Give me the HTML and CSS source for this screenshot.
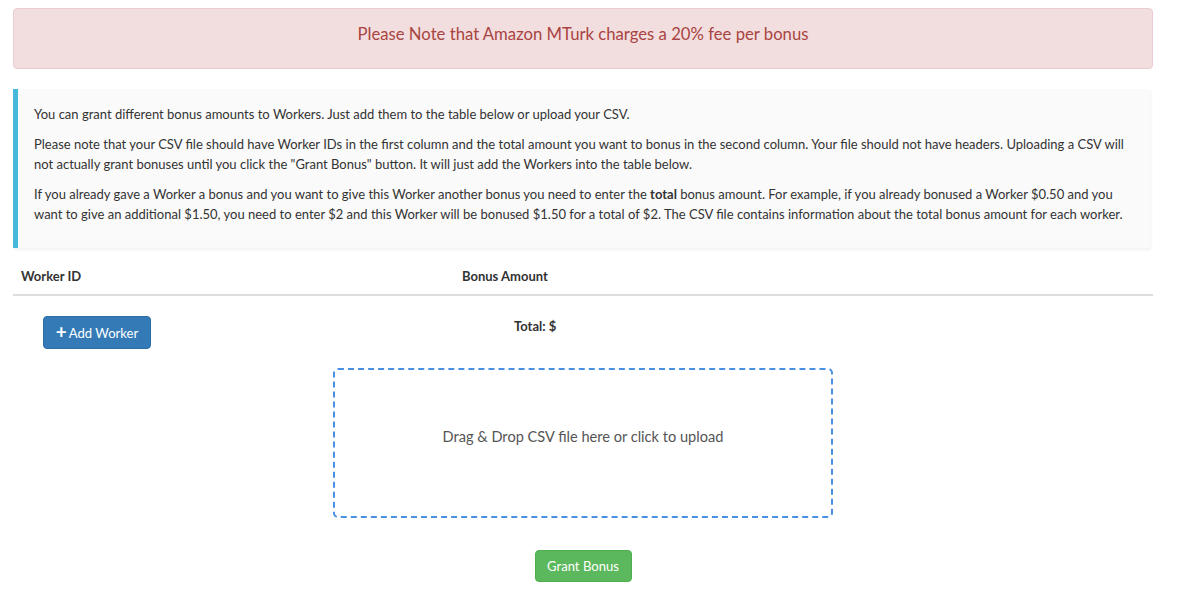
FILE: index.html
```html
<!DOCTYPE html>
<html lang="en">

<head>
    <meta charset="UTF-8">
    <meta name="viewport" content="width=device-width, initial-scale=1.0">
    <title>Grant Bonus</title>
    <link rel="stylesheet" href="styles.css">
</head>

<body>
    <div class="page">
        <!-- Fee warning -->
        <div class="alert-fee">Please Note that Amazon MTurk charges a 20% fee per bonus</div>

        <!-- Info callout -->
        <div class="callout">
            <p>You can grant different bonus amounts to Workers. Just add them to the table below or upload your CSV.</p>
            <p>Please note that your CSV file should have Worker IDs in the first column and the total amount you want to bonus in the second column. Your file should not have headers. Uploading a CSV will not actually grant bonuses until you click the "Grant Bonus" button. It will just add the Workers into the table below.</p>
            <p>If you already gave a Worker a bonus and you want to give this Worker another bonus you need to enter the <b>total</b> bonus amount. For example, if you already bonused a Worker $0.50 and you want to give an additional $1.50, you need to enter $2 and this Worker will be bonused $1.50 for a total of $2. The CSV file contains information about the total bonus amount for each worker.</p>
        </div>

        <!-- Bonus table -->
        <table class="bonus-table">
            <thead>
                <tr>
                    <th class="col-id">Worker ID</th>
                    <th class="col-amount">Bonus Amount</th>
                </tr>
            </thead>
            <tbody>
                <tr>
                    <td class="col-id">
                        <button class="btn btn-primary"><span class="plus">+</span>Add Worker</button>
                    </td>
                    <td class="col-amount total">Total: $</td>
                </tr>
            </tbody>
        </table>

        <div class="dropzone">Drag &amp; Drop CSV file here or click to upload</div>

        <div class="actions">
            <button class="btn btn-success">Grant Bonus</button>
        </div>
    </div>
</body>

</html>
```

FILE: styles.css
```css
* {
    margin: 0;
    padding: 0;
    box-sizing: border-box;
}

body {
    font-family: "Lato", "Noto Sans", sans-serif;
    font-size: 13px;
    line-height: 20px;
    color: #333;
    background: #fff;
}

.page {
    width: 1140px;
    margin-left: 13px;
    padding-top: 8px;
}

/* Fee warning */
.alert-fee {
    height: 61px;
    padding-top: 15px;
    text-align: center;
    background: #f2dede;
    border: 1px solid #ebccd1;
    border-radius: 4px;
    color: #a94442;
    font-size: 16.7px;
    line-height: 20px;
}

/* Info callout */
.callout {
    margin-top: 20px;
    padding: 15px 12px 16px 16px;
    background: #fafafa;
    border-left: 5px solid #46b8da;
    box-shadow: 1px 2px 3px rgba(0, 0, 0, 0.06);
    height: 159px;
    width: 1137px;
    overflow: hidden;
}

.callout p {
    margin-bottom: 10px;
}

/* Table */
.bonus-table {
    width: 100%;
    margin-top: 10px;
    border-collapse: collapse;
}

.bonus-table th {
    text-align: left;
    font-weight: bold;
    padding: 8px;
    line-height: 20px;
    border-bottom: 2px solid #ddd;
}

.bonus-table .col-id {
    width: 441px;
}

.bonus-table td {
    padding: 20px 8px 0 30px;
    vertical-align: top;
}

.bonus-table td.total {
    padding: 20px 0 0 60px;
    font-weight: bold;
}

.btn {
    font-family: inherit;
    font-size: 13.1px;
    line-height: 20px;
    border-radius: 4px;
    border: 1px solid transparent;
    color: #fff;
    cursor: pointer;
}

.btn-primary {
    background: #337ab7;
    border-color: #2e6da4;
    width: 108px;
    height: 33px;
}

.plus {
    font-size: 19px;
    font-weight: bold;
    margin-right: 2px;
    vertical-align: -1px;
}

.btn-success {
    background: #5cb85c;
    border-color: #4cae4c;
    width: 97px;
    height: 32px;
}

/* Dropzone */
.dropzone {
    width: 500px;
    height: 150px;
    margin: 19px auto 0 320px;
    padding-bottom: 12px;
    border: 2px dashed #4a90e2;
    border-radius: 5px;
    display: flex;
    align-items: center;
    justify-content: center;
    font-size: 14.6px;
    color: #555;
}

.actions {
    width: 500px;
    margin: 32px 0 0 320px;
    display: flex;
    justify-content: center;
}
```
